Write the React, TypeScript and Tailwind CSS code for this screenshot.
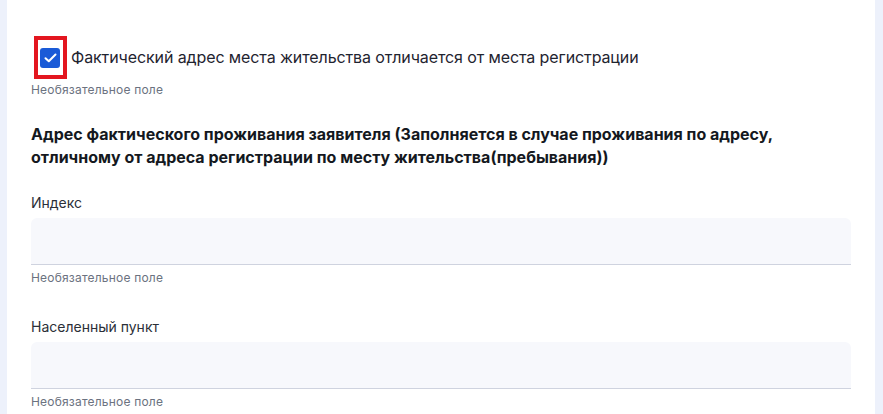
import React from "react";

function Hint() {
  return <div className="text-[12px] leading-[16px] text-[#6b7280] tracking-[0.2px]">Необязательное поле</div>;
}

function Field({ label }: { label: string }) {
  return (
    <div className="flex flex-col">
      <div className="text-[14px] leading-[20px] text-[#2b2f38]">{label}</div>
      <div className="mt-[5px] h-[47px] rounded-t-[6px] bg-[#f7f8fc] border-b border-[#cfd3df]" />
      <div className="mt-[5px]"><Hint /></div>
    </div>
  );
}

export default function App() {
  return (
    <div className="flex h-[414px] w-full bg-[#edf1fb] pl-[7px] pr-[8px]" style={{ fontFamily: "Inter, 'Noto Sans', sans-serif" }}>
      <div className="flex-1 bg-white pl-[24px] pr-[24px] pt-[36px] overflow-hidden">
        <div className="flex items-center">
          <div className="ml-[3px] border-[4px] border-[#e3161f] pl-[2px] pr-[3px] pt-[8px] pb-[7px]">
            <div className="w-[20px] h-[20px] rounded-[3px] bg-[#1a5ad7] flex items-center justify-center">
              <svg width="13" height="10" viewBox="0 0 13 10" fill="none">
                <path d="M1.5 5.2 L4.8 8.3 L11.5 1.5" stroke="white" strokeWidth="2" strokeLinecap="round" strokeLinejoin="round" />
              </svg>
            </div>
          </div>
          <div className="ml-[4px] text-[16px] leading-[22px] text-[#1f2430] tracking-[-0.1px] -mt-[1px]">Фактический адрес места жительства отличается от места регистрации</div>
        </div>
        <div className="mt-[3px]"><Hint /></div>
        <div className="mt-[25px] text-[16px] leading-[23px] font-bold text-[#141820]">
          Адрес фактического проживания заявителя (Заполняется в случае проживания по адресу, отличному от адреса регистрации по месту жительства(пребывания))
        </div>
        <div className="mt-[24px]"><Field label="Индекс" /></div>
        <div className="mt-[31px]"><Field label="Населенный пункт" /></div>
      </div>
    </div>
  );
}
